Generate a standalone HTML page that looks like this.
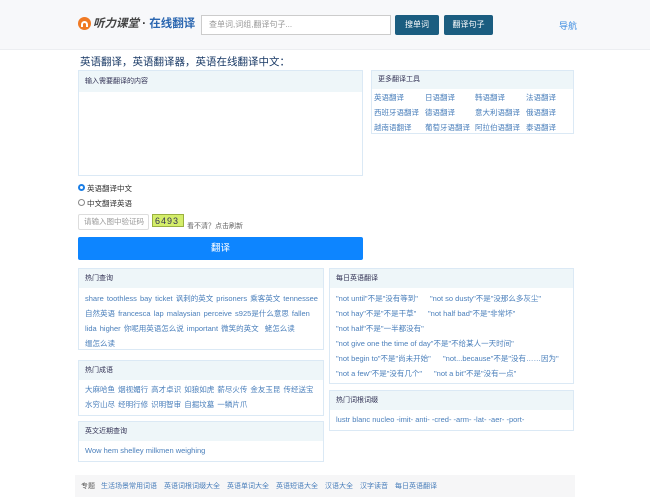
<!DOCTYPE html>
<html><head><meta charset="utf-8">
<style>
*{margin:0;padding:0;box-sizing:border-box}
body{width:650px;height:500px;background:#fff;font-family:"Liberation Sans","Noto Sans CJK SC",sans-serif;position:relative;overflow:hidden;color:#333}
.a{position:absolute}
.hdr{left:0;top:0;width:650px;height:50px;background:#f7f8fa;border-bottom:1px solid #eceef1}
.btn{background:#1b5d80;color:#fff;font-size:8px;text-align:center;line-height:20px;border-radius:2px;height:20px;top:15px}
.box{border:1px solid #dbe9f5;background:#fff}
.box .h{background:#eef6f9;height:21px;line-height:21px;font-size:7px;padding-left:6px;color:#335}
.row{position:absolute;font-size:7.5px;color:#4a7fbb;white-space:nowrap}
.ft span{margin-right:7px}
</style></head><body>
<div class="a hdr"></div>
<div class="a" style="left:78px;top:17px;width:13px;height:13px;border-radius:50%;background:#f07a24"></div>
<div class="a" style="left:81px;top:21px;width:7px;height:6px;border:2px solid #fff;border-bottom:none;border-radius:4px 4px 0 0"></div>
<div class="a" style="left:93px;top:15px;font-size:11.5px;font-weight:bold;font-style:italic;color:#444;white-space:nowrap">听力课堂<span style="font-style:normal;color:#333"> · </span><span style="font-style:normal;color:#2a66b0">在线翻译</span></div>
<div class="a" style="left:201px;top:15px;width:190px;height:20px;border:1px solid #ccc;background:#fff;font-size:8px;color:#999;line-height:18px;padding-left:7px">查单词,词组,翻译句子...</div>
<div class="a btn" style="left:395px;width:44px">搜单词</div>
<div class="a btn" style="left:444px;width:49px">翻译句子</div>
<div class="a" style="left:559px;top:19px;font-size:9px;color:#3b8be0">导航</div>

<div class="a" style="left:80px;top:54px;font-size:10.5px;color:#1a3a66;white-space:nowrap">英语翻译，英语翻译器，英语在线翻译中文：</div>

<div class="a box" style="left:78px;top:70px;width:285px;height:106px"><div class="h">输入需要翻译的内容</div></div>

<div class="a box" style="left:371px;top:70px;width:203px;height:64px"><div class="h" style="height:18px;line-height:18px">更多翻译工具</div></div>
<div class="row" style="left:374px;top:92px">英语翻译</div><div class="row" style="left:425px;top:92px">日语翻译</div><div class="row" style="left:475px;top:92px">韩语翻译</div><div class="row" style="left:526px;top:92px">法语翻译</div>
<div class="row" style="left:374px;top:107px">西班牙语翻译</div><div class="row" style="left:425px;top:107px">德语翻译</div><div class="row" style="left:475px;top:107px">意大利语翻译</div><div class="row" style="left:526px;top:107px">俄语翻译</div>
<div class="row" style="left:374px;top:122px">越南语翻译</div><div class="row" style="left:425px;top:122px">葡萄牙语翻译</div><div class="row" style="left:475px;top:122px">阿拉伯语翻译</div><div class="row" style="left:526px;top:122px">泰语翻译</div>

<div class="a" style="left:78px;top:184px;width:7px;height:7px;border-radius:50%;border:2px solid #1a7ee6"></div>
<div class="a" style="left:87px;top:183px;font-size:7.5px;color:#333">英语翻译中文</div>
<div class="a" style="left:78px;top:199px;width:7px;height:7px;border-radius:50%;border:1px solid #888"></div>
<div class="a" style="left:87px;top:198px;font-size:7.5px;color:#333">中文翻译英语</div>
<div class="a" style="left:78px;top:214px;width:71px;height:16px;border:1px solid #ddd;border-radius:2px;font-size:7.5px;color:#999;line-height:14px;padding-left:5px">请输入图中验证码</div>
<div class="a" style="left:152px;top:214px;width:32px;height:13px;background:#d4ee6a;border:1px solid #9ab040;font-size:9px;color:#335;line-height:12px;letter-spacing:1px;padding-left:2px">6493</div>
<div class="a" style="left:187px;top:221px;font-size:7px;color:#666">看不清？点击刷新</div>
<div class="a" style="left:78px;top:237px;width:285px;height:23px;background:#0d85ff;border-radius:2px;color:#fff;font-size:9.5px;text-align:center;line-height:23px">翻译</div>

<div class="a box" style="left:78px;top:268px;width:246px;height:82px"><div class="h" style="height:19px;line-height:19px">热门查询</div></div>
<div class="row" style="left:85px;top:293px;word-spacing:1px">share toothless bay ticket 讽刺的英文 prisoners 乘客英文 tennessee</div>
<div class="row" style="left:85px;top:308px;word-spacing:1px">自然英语 francesca lap malaysian perceive s925是什么意思 fallen</div>
<div class="row" style="left:85px;top:323px;word-spacing:1px">lida higher 你呢用英语怎么说 important 微笑的英文 &nbsp;蛯怎么读</div>
<div class="row" style="left:85px;top:338px">缊怎么读</div>

<div class="a box" style="left:78px;top:360px;width:246px;height:56px"><div class="h" style="height:19px;line-height:19px">热门成语</div></div>
<div class="row" style="left:85px;top:384px;word-spacing:1px">大麻哈鱼 烟视媚行 高才卓识 如狼如虎 薪尽火传 金友玉昆 传经送宝</div>
<div class="row" style="left:85px;top:399px;word-spacing:1px">水穷山尽 经明行修 识明智审 自掘坟墓 一鳞片爪</div>

<div class="a box" style="left:78px;top:421px;width:246px;height:41px"><div class="h" style="height:19px;line-height:19px">英文近期查询</div></div>
<div class="row" style="left:85px;top:446px">Wow hem shelley milkmen weighing</div>

<div class="a box" style="left:329px;top:268px;width:245px;height:116px"><div class="h" style="height:19px;line-height:19px">每日英语翻译</div></div>
<div class="row" style="left:336px;top:293px">"not until"不是"没有等到"</div><div class="row" style="left:430px;top:293px">"not so dusty"不是"没那么多灰尘"</div>
<div class="row" style="left:336px;top:308px">"not hay"不是"不是干草"</div><div class="row" style="left:428px;top:308px">"not half bad"不是"非常坏"</div>
<div class="row" style="left:336px;top:323px">"not half"不是"一半都没有"</div>
<div class="row" style="left:336px;top:338px">"not give one the time of day"不是"不给某人一天时间"</div>
<div class="row" style="left:336px;top:353px">"not begin to"不是"尚未开始"</div><div class="row" style="left:443px;top:353px">"not...because"不是"没有……因为"</div>
<div class="row" style="left:336px;top:368px">"not a few"不是"没有几个"</div><div class="row" style="left:434px;top:368px">"not a bit"不是"没有一点"</div>

<div class="a box" style="left:329px;top:390px;width:245px;height:41px"><div class="h" style="height:19px;line-height:19px">热门词根词缀</div></div>
<div class="row" style="left:336px;top:415px">lustr blanc nucleo -imit- anti- -cred- -arm- -lat- -aer- -port-</div>

<div class="a" style="left:75px;top:475px;width:500px;height:22px;background:#f6f6f7"></div>
<div class="row ft" style="left:81px;top:481px;font-size:7px"><span style="color:#555;margin-right:6px">专题</span><span>生活场景常用词语</span><span>英语词根词缀大全</span><span>英语单词大全</span><span>英语短语大全</span><span>汉语大全</span><span>汉字读音</span><span>每日英语翻译</span></div>
</body></html>
